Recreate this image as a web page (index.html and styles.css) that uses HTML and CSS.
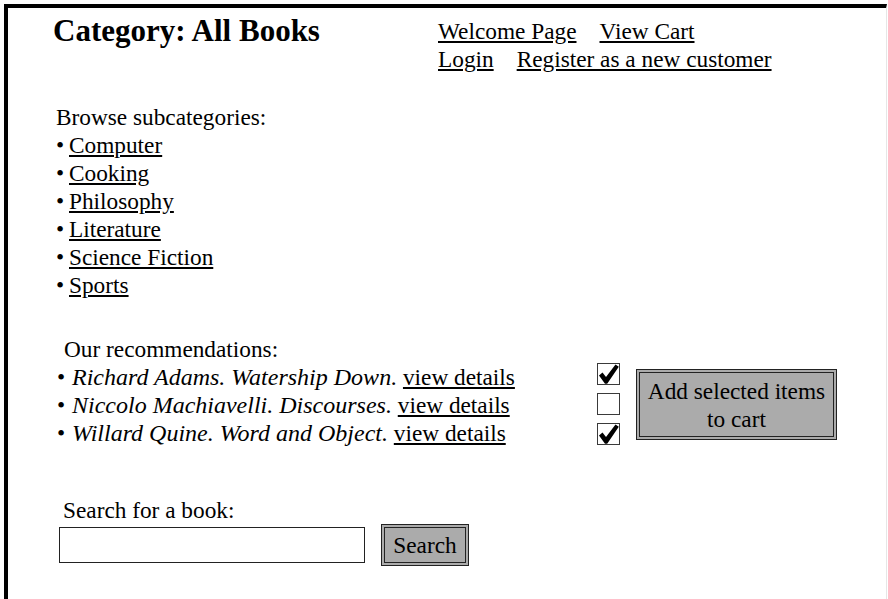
FILE: index.html
```html
<!DOCTYPE html>
<html lang="en">
<head>
<meta charset="utf-8">
<title>Category: All Books</title>
<link rel="stylesheet" href="styles.css">
</head>
<body>
<div class="frame">
  <header class="top">
    <h1 class="title">Category: All Books</h1>
    <nav class="links">
      <div class="link-row"><a href="#">Welcome Page</a><a href="#">View Cart</a></div>
      <div class="link-row"><a href="#">Login</a><a href="#">Register as a new customer</a></div>
    </nav>
  </header>

  <section class="browse">
    <p class="label">Browse subcategories:</p>
    <ul class="plain">
      <li><span class="dot">&bull;</span><a href="#">Computer</a></li>
      <li><span class="dot">&bull;</span><a href="#">Cooking</a></li>
      <li><span class="dot">&bull;</span><a href="#">Philosophy</a></li>
      <li><span class="dot">&bull;</span><a href="#">Literature</a></li>
      <li><span class="dot">&bull;</span><a href="#">Science Fiction</a></li>
      <li><span class="dot">&bull;</span><a href="#">Sports</a></li>
    </ul>
  </section>

  <section class="recs">
    <div class="rec-list">
      <p class="label rec-label">Our recommendations:</p>
      <ul class="plain">
        <li><span class="dot wide">&bull;</span><i class="book">Richard Adams. Watership Down.</i> <a href="#">view details</a></li>
        <li><span class="dot wide">&bull;</span><i class="book">Niccolo Machiavelli. Discourses.</i> <a href="#">view details</a></li>
        <li><span class="dot wide">&bull;</span><i class="book">Willard Quine. Word and Object.</i> <a href="#">view details</a></li>
      </ul>
    </div>
    <div class="checks">
      <span class="box"><svg viewBox="0 0 23 22" width="23" height="22"><path d="M2 12.5 L5.5 9.5 L9 14 L18.5 1.5 L21.8 3.8 L10.2 20.8 L8 20.8 Z"/></svg></span>
      <span class="box"></span>
      <span class="box"><svg viewBox="0 0 23 22" width="23" height="22"><path d="M2 12.5 L5.5 9.5 L9 14 L18.5 1.5 L21.8 3.8 L10.2 20.8 L8 20.8 Z"/></svg></span>
    </div>
    <button class="btn add" type="button">Add selected items<br>to cart</button>
  </section>

  <form class="search">
    <label class="label search-label" for="q">Search for a book:</label>
    <div class="search-row">
      <input id="q" class="field" type="text">
      <button class="btn go" type="button">Search</button>
    </div>
  </form>
</div>
</body>
</html>
```

FILE: styles.css
```css
html, body {
  margin: 0;
  padding: 0;
  overflow: hidden;
  background: #fff;
}

body {
  font-family: "Liberation Serif", "Times New Roman", serif;
  font-size: 23.3px;
  line-height: 28px;
  color: #000;
}

a {
  color: #000;
  text-decoration: underline;
}

.frame {
  margin: 4px 0 0 4px;
  width: 878px;
  height: 591px;
  border-top: 4px solid #000;
  border-left: 4px solid #000;
  border-right: 1px solid #e6e6e6;
}

/* heading + navigation */
.top {
  display: grid;
  grid-template-columns: 385px auto;
  padding: 9px 0 0 45px;
}

.title {
  margin: 0;
  font-size: 31px;
  line-height: 28px;
  font-weight: bold;
}

.link-row {
  display: flex;
  gap: 23px;
}

/* lists */
.label {
  margin: 0;
}

.plain {
  list-style: none;
  margin: 0;
  padding: 0;
}

.dot {
  display: inline-block;
  width: 13px;
}

.dot.wide {
  width: 15px;
}

.browse {
  padding: 30px 0 0 48px;
}

/* recommendations */
.recs {
  display: flex;
  align-items: flex-start;
  padding: 36px 0 0 49px;
}

.rec-list {
  flex: 0 0 540px;
}

.rec-label {
  padding-left: 7px;
}

.book {
  font-size: 24px;
}

.checks {
  display: flex;
  flex-direction: column;
  gap: 8px;
  margin-top: 28px;
}

.box {
  display: block;
  width: 21px;
  height: 20px;
  border: 1px solid #3a3a3a;
  background: #fff;
  position: relative;
}

.box svg {
  position: absolute;
  left: -1px;
  top: -1px;
  fill: #000;
}

.btn {
  font-family: "Liberation Serif", "Times New Roman", serif;
  font-size: 23.3px;
  line-height: 28px;
  color: #000;
  background: #ababab;
  border: 4px double #222;
  padding: 0;
  margin: 0;
  cursor: pointer;
}

.add {
  width: 201px;
  height: 71px;
  margin: 34px 0 0 16px;
  text-align: center;
}

/* search form */
.search {
  padding: 49px 0 0 51px;
}

.search-label {
  display: block;
  padding-left: 4px;
}

.search-row {
  display: flex;
  align-items: center;
  gap: 16px;
  margin-top: 0;
}

.field {
  width: 306px;
  height: 36px;
  box-sizing: border-box;
  border: 1px solid #222;
  background: #fff;
  margin: 0;
  padding: 0 4px;
  font: inherit;
}

.go {
  width: 88px;
  height: 42px;
}
```
